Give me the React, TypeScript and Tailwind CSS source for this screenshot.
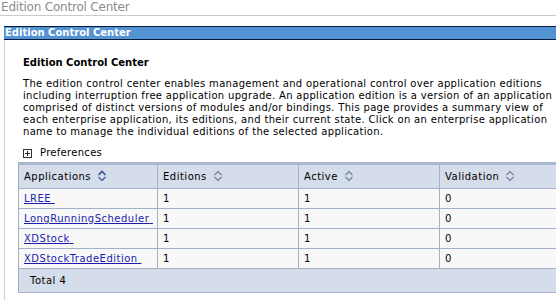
import React from 'react'

const rows = [
  { name: 'LREE', editions: 1, active: 1, validation: 0 },
  { name: 'LongRunningScheduler', editions: 1, active: 1, validation: 0 },
  { name: 'XDStock', editions: 1, active: 1, validation: 0 },
  { name: 'XDStockTradeEdition', editions: 1, active: 1, validation: 0 },
]

function SortIcon({ active }: { active?: boolean }) {
  const c = active ? '#34549a' : '#6b7a94'
  return (
    <svg width="10" height="12" viewBox="0 0 10 12" className="inline-block ml-[6px] -mt-[2px]">
      <path d="M1.5 5 L5 1.5 L8.5 5" fill="none" stroke={c} strokeWidth={active ? 1.7 : 1.1} />
      <path d="M1.5 7 L5 10.5 L8.5 7" fill="none" stroke={c} strokeWidth={1.1} />
    </svg>
  )
}

export default function App() {
  return (
    <div className="h-[302px] w-[556px] overflow-hidden bg-white font-['DejaVu_Sans',sans-serif] text-black">
      {/* page title */}
      <div className="h-[16px] border-b border-[#c8ccd0] pl-[1px] text-[12px] leading-[15px] tracking-[-0.2px] text-[#8c8c8c]">
        Edition Control Center
      </div>

      {/* blue title bar */}
      <div className="ml-[4px] mt-[10px] h-[14px] border-y border-[#0a1a3a] bg-[#5293d4] pl-[1px] text-[10px] font-bold leading-[12px] text-white">
        Edition Control Center
      </div>

      {/* panel */}
      <div className="ml-[4px] h-[260px] border-l border-[#d0d0d0] pl-[13px]">
        <div className="pl-[5px] pt-[17px] text-[10px] font-bold leading-[12px]">Edition Control Center</div>
        <p className="mt-[9px] w-[640px] whitespace-nowrap pl-[5px] text-[10px] leading-[12px] tracking-[0.32px]">
          The edition control center enables management and operational control over application editions
          <br />
          including interruption free application upgrade. An application edition is a version of an application
          <br />
          comprised of distinct versions of modules and/or bindings. This page provides a summary view of
          <br />
          each enterprise application, its editions, and their current state. Click on an enterprise application
          <br />
          name to manage the individual editions of the selected application.
        </p>

        <div className="mt-[9px] flex items-center pl-[5px] text-[10px] leading-[12px] tracking-[0.3px]">
          <span className="flex h-[9px] w-[9px] items-center justify-center border border-[#333]">
            <svg width="7" height="7" viewBox="0 0 7 7">
              <path d="M3.5 1 V6 M1 3.5 H6" stroke="#222" strokeWidth="1" />
            </svg>
          </span>
          <span className="ml-[8px]">Preferences</span>
        </div>

        <table className="mt-[3px] w-[640px] border-collapse text-[10px] leading-[12px] tracking-[0.5px]">
          <colgroup>
            <col className="w-[139px]" />
            <col className="w-[141px]" />
            <col className="w-[141px]" />
            <col />
          </colgroup>
          <thead>
            <tr className="h-[25px] border-t-[3px] border-[#a9b7cf] bg-[#d5dcea]">
              <th className="border-x border-b border-[#a2b0c8] pl-[5px] text-left font-normal">
                Applications
                <SortIcon active />
              </th>
              <th className="border-x border-b border-[#a2b0c8] pl-[5px] text-left font-normal">
                Editions
                <SortIcon />
              </th>
              <th className="border-x border-b border-[#a2b0c8] pl-[5px] text-left font-normal">
                Active
                <SortIcon />
              </th>
              <th className="border-x border-b border-[#a2b0c8] pl-[5px] text-left font-normal">
                Validation
                <SortIcon />
              </th>
            </tr>
          </thead>
          <tbody>
            {rows.map((r) => (
              <tr key={r.name} className="h-[20px] bg-[#f8f8f8]">
                <td className="border border-[#a2b0c8] pl-[5px]">
                  <a href="#" className="text-[#1c1cb0] underline">
                    {r.name}&nbsp;
                  </a>
                </td>
                <td className="border border-[#a2b0c8] pl-[5px]">{r.editions}</td>
                <td className="border border-[#a2b0c8] pl-[5px]">{r.active}</td>
                <td className="border border-[#a2b0c8] pl-[5px]">{r.validation}</td>
              </tr>
            ))}
            <tr className="h-[24px] bg-[#d5dcea]">
              <td colSpan={4} className="border border-[#a2b0c8] pl-[11px]">
                Total 4
              </td>
            </tr>
          </tbody>
        </table>
      </div>
    </div>
  )
}
